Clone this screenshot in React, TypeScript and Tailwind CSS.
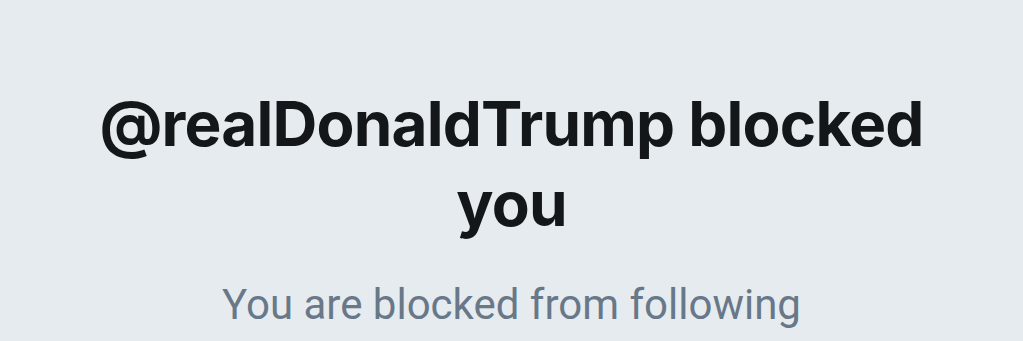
export default function App() {
  return (
    <div className="w-full h-[341px] overflow-hidden bg-[#e6ebef] flex flex-col items-center pt-[84px] font-['Inter','Liberation_Sans',sans-serif]">
      <h1 className="w-[900px] text-center text-[#14171a] text-[62px] font-bold leading-[80px] tracking-[-0.8px]">
        @realDonaldTrump blocked you
      </h1>
      <p className="mt-[33px] w-[640px] text-center text-[#687888] text-[42px] leading-[56px] font-['Roboto','Liberation_Sans',sans-serif]">
        You are blocked from following @realDonaldTrump and viewing @realDonaldTrump's Tweets.
      </p>
    </div>
  );
}
